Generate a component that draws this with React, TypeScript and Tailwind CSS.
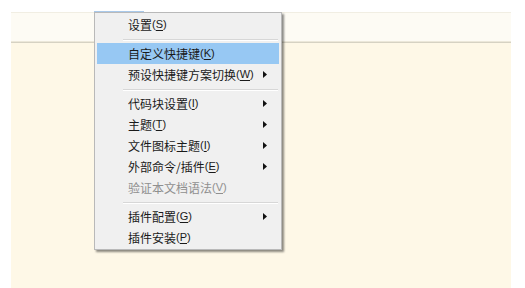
import type { ReactNode } from "react";

type Item =
  | { sep: true }
  | { label: string; key: string; sub?: boolean; active?: boolean; disabled?: boolean };

const items: Item[] = [
  { label: "设置", key: "S" },
  { sep: true },
  { label: "自定义快捷键", key: "K", active: true },
  { label: "预设快捷键方案切换", key: "W", sub: true },
  { sep: true },
  { label: "代码块设置", key: "I", sub: true },
  { label: "主题", key: "T", sub: true },
  { label: "文件图标主题", key: "I", sub: true },
  { label: "外部命令/插件", key: "E", sub: true },
  { label: "验证本文档语法", key: "V", disabled: true },
  { sep: true },
  { label: "插件配置", key: "G", sub: true },
  { label: "插件安装", key: "P" },
];

function Arrow() {
  return (
    <svg width="4" height="7" viewBox="0 0 4 7" className="mr-[12px]">
      <path d="M0 0 L4 3.5 L0 7 Z" fill="#111" />
    </svg>
  );
}

function Label({ label, k }: { label: string; k: string }): ReactNode {
  return (
    <span className="flex items-center">
      {label}
      <span className="text-[11px] font-['Liberation_Sans',sans-serif]">
        (<span className="underline underline-offset-2">{k}</span>)
      </span>
    </span>
  );
}

export default function App() {
  return (
    <div
      className="relative w-[525px] h-[288px] bg-white overflow-hidden"
      style={{ fontFamily: '"Noto Sans CJK SC", "Noto Sans", sans-serif' }}
    >
      <div className="ml-[11px] mt-[12px] w-[500px] h-[276px] flex flex-col">
        <div className="h-[29px] bg-[#fdfbf4] border-t border-[#f1eee3]" />
        <div className="h-[1px] bg-[#ece8da]" />
        <div className="h-[1px] bg-[#d6d2c3]" />
        <div className="flex-1 bg-[#fef8e7]" />
      </div>

      <div className="absolute left-[94px] top-[11px] w-[50px] h-[1px] bg-[#a9c9ea]" />

      <div className="absolute left-[94px] top-[12px] w-[188px] bg-[#f0f0f0] border border-[#b9b9b9] shadow-[2px_2px_2px_rgba(0,0,0,0.45)] py-[1px] px-[2px] flex flex-col text-[12px] leading-none">
        {items.map((it, i) =>
          "sep" in it ? (
            <div key={i} className="h-[8px] flex items-center pl-[26px] pr-[1px]">
              <div className="w-full h-[1px] bg-[#d7d7d7] shadow-[0_1px_0_#ffffff]" />
            </div>
          ) : (
            <div
              key={i}
              className={
                "h-[21px] flex items-center justify-between pl-[31px] " +
                (it.active ? "bg-[#97c8f3] " : "") +
                (it.disabled ? "text-[#8f8f8f]" : "text-[#1a1a1a]")
              }
            >
              <Label label={it.label} k={it.key} />
              {it.sub && <Arrow />}
            </div>
          )
        )}
      </div>
    </div>
  );
}
